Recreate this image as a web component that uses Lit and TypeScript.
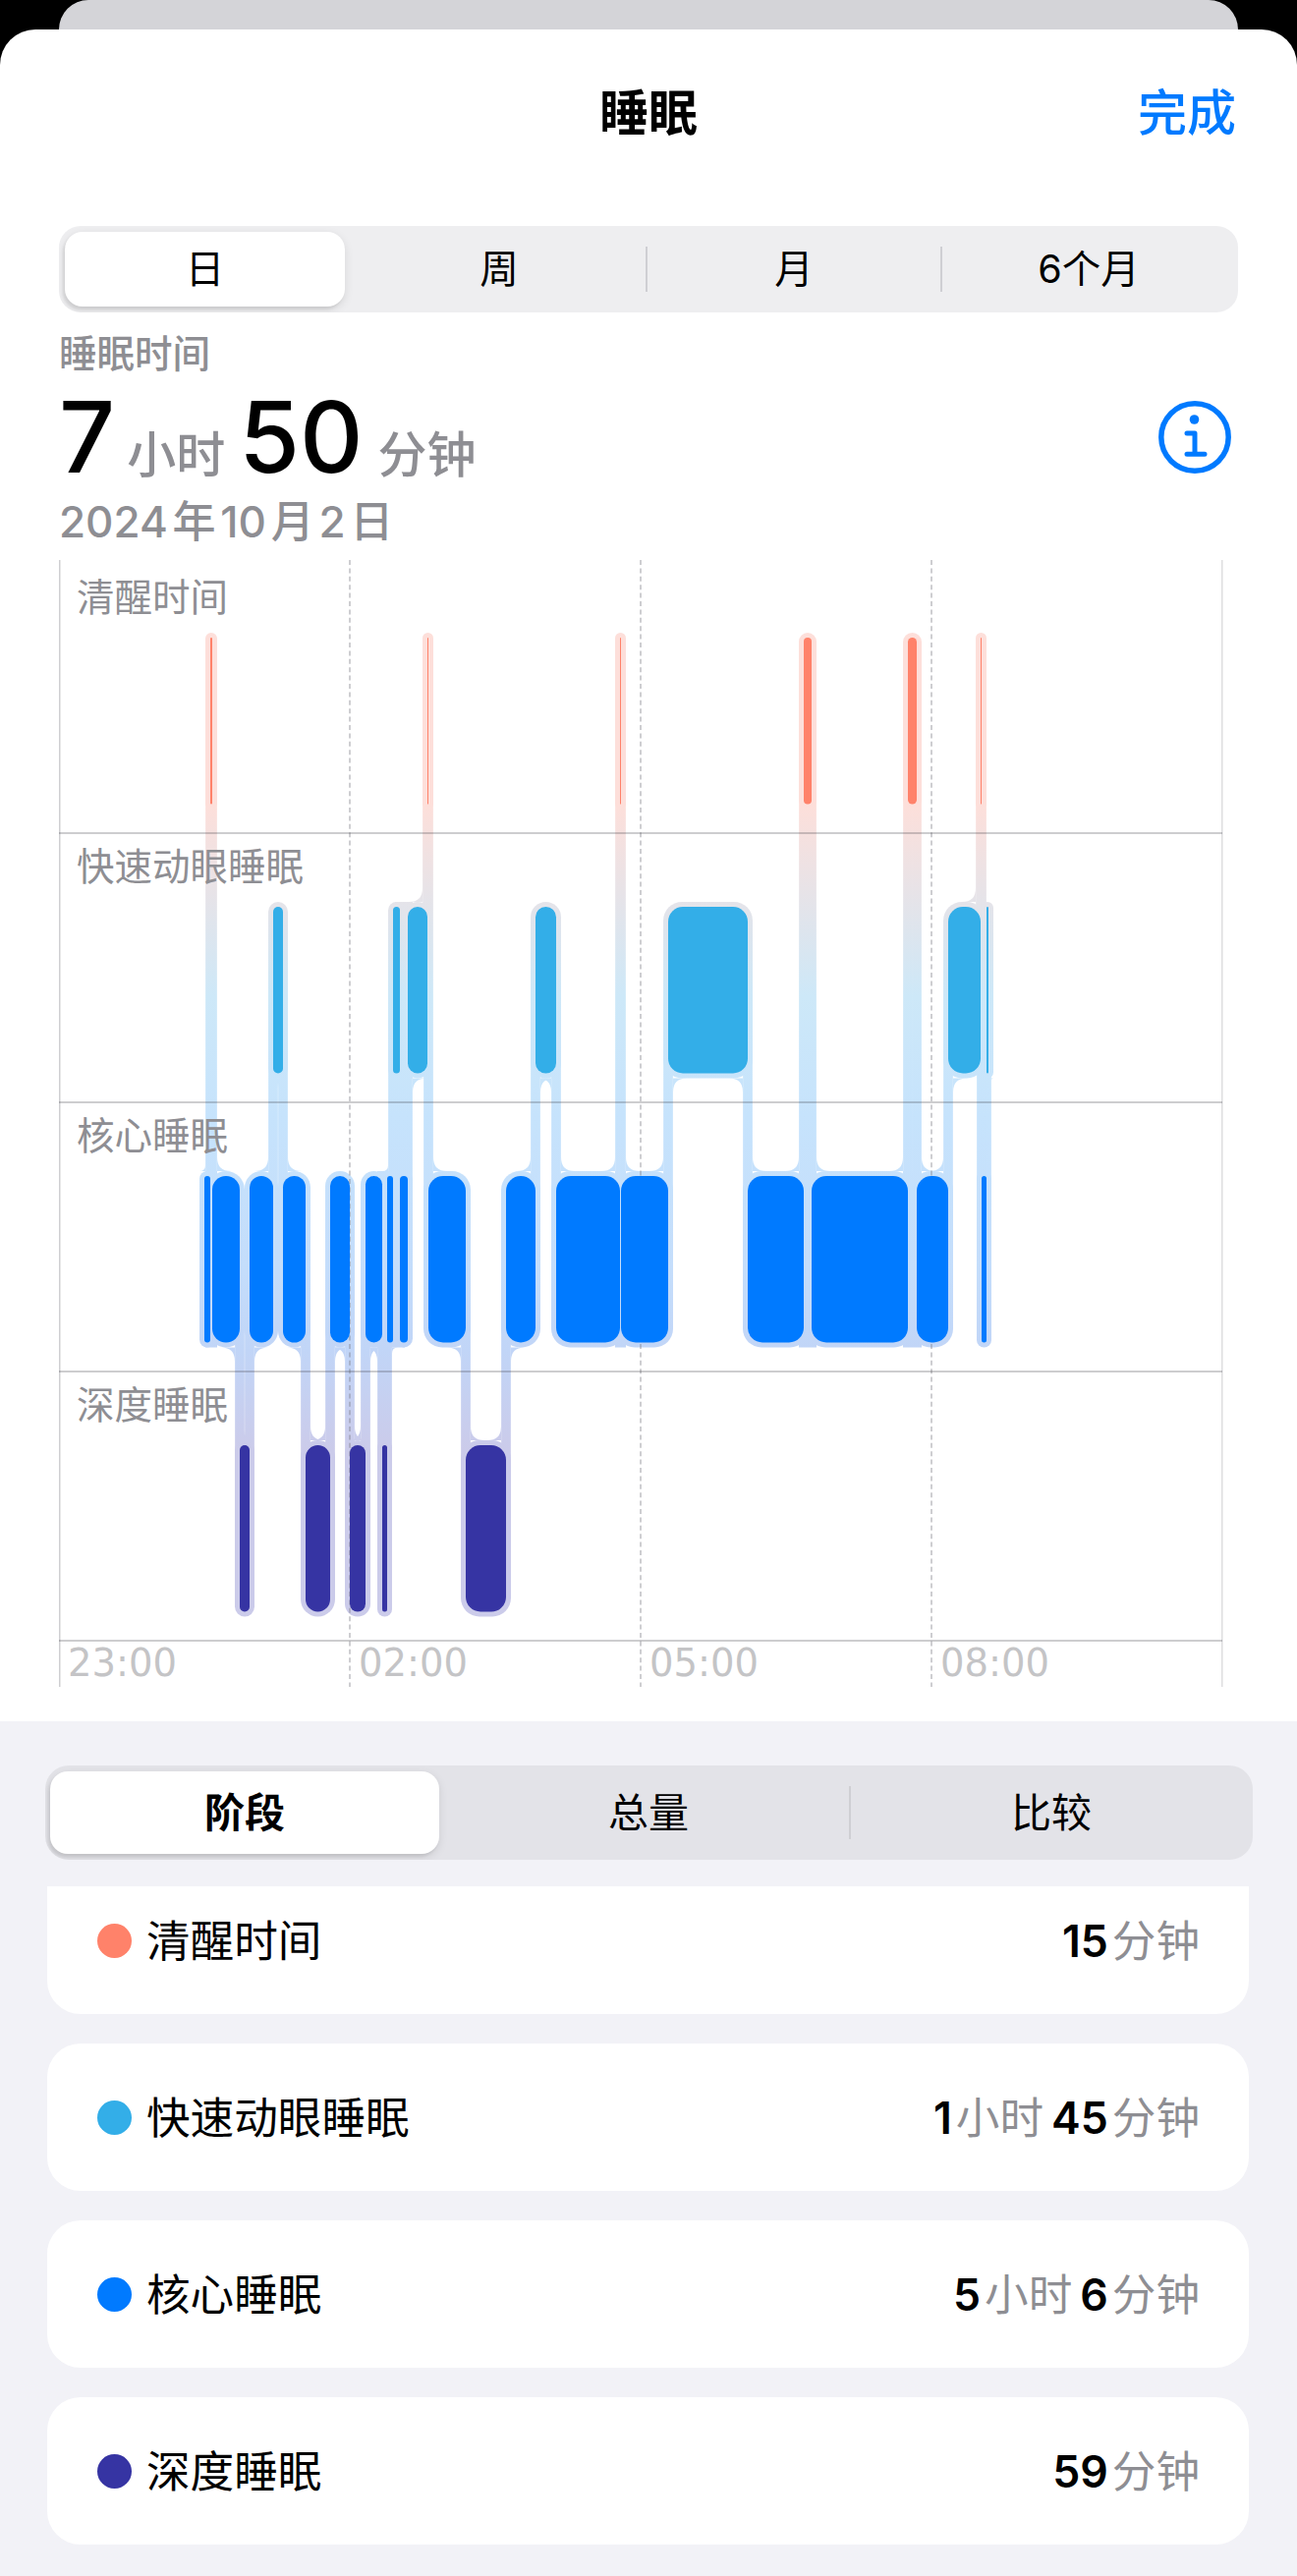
import { LitElement, html, css, svg } from "lit";
import { customElement } from "lit/decorators.js";

// stage: 0 awake, 1 rem, 2 core, 3 deep
const SEGMENTS: [number, number, number][] = [
  [2, 208, 214], [0, 214, 216], [2, 216, 244], [3, 244, 254], [2, 254, 278],
  [1, 278, 288], [2, 288, 311], [3, 311, 336], [2, 336, 356], [3, 356, 372],
  [2, 372, 389], [3, 389, 394], [2, 394, 400], [1, 400, 407], [2, 407, 415],
  [1, 415, 435], [0, 435, 436], [2, 436, 474], [3, 474, 515], [2, 515, 545],
  [1, 545, 566], [2, 566, 631], [0, 631, 632], [2, 632, 680], [1, 680, 761],
  [2, 761, 818], [0, 818, 826], [2, 826, 924], [0, 924, 933], [2, 933, 965],
  [1, 965, 998], [0, 998, 999], [2, 999, 1004], [1, 1004, 1006],
];
const STAGE_TOP = [649, 923, 1197, 1471];
const BAR_H = 169.5;
const PAD = 5;
const COLORS = ["#ff826a", "#33aee8", "#007aff", "#3634a3"];
const GRID_H = [848, 1122, 1396, 1670];
const GRID_DASH = [356, 652, 948];

const LEGEND = [
  { name: "清醒时间", color: COLORS[0], value: [["15", "分钟"]] },
  { name: "快速动眼睡眠", color: COLORS[1], value: [["1", "小时"], ["45", "分钟"]] },
  { name: "核心睡眠", color: COLORS[2], value: [["5", "小时"], ["6", "分钟"]] },
  { name: "深度睡眠", color: COLORS[3], value: [["59", "分钟"]] },
];

function fillet(x: number, y: number, side: number, dir: number, r: number) {
  return svg`<path d="M${x} ${y}L${x} ${y + dir * r}Q${x} ${y} ${x + side * r} ${y}Z" />`;
}

function halos() {
  const out: unknown[] = [];
  SEGMENTS.forEach(([stage, a, b], i) => {
    const rx = Math.min((b - a + 2 * PAD) / 2, 19);
    out.push(svg`<rect x=${a - PAD} y=${STAGE_TOP[stage] - PAD} width=${b - a + 2 * PAD} height=${BAR_H + 2 * PAD} rx=${rx} />`);

    // same stage again right after a short visit elsewhere: the halo stays flat
    const after = SEGMENTS[i + 2];
    if (after && after[0] === stage && after[1] - b < 10) {
      out.push(svg`<rect x=${b - PAD} y=${STAGE_TOP[stage] - PAD} width=${after[1] - b + 2 * PAD} height=${BAR_H + 2 * PAD} />`);
    }

    // connector to the next stage, with its two inner fillets
    const next = SEGMENTS[i + 1];
    if (!next) return;
    const [nextStage, , nextEnd] = next;
    const down = nextStage > stage;
    const upper = down ? stage : nextStage;
    const lower = down ? nextStage : stage;
    const y0 = STAGE_TOP[upper] + BAR_H / 2;
    const y1 = STAGE_TOP[lower] + BAR_H / 2;
    out.push(svg`<rect x=${b - 4.85} y=${y0} width="9.7" height=${y1 - y0} />`);

    const yUpper = STAGE_TOP[upper] + BAR_H + PAD;
    const yLower = STAGE_TOP[lower] - PAD;
    const rPrev = Math.min(14, b - a);
    const rNext = Math.min(14, nextEnd - b);
    if (down) {
      out.push(fillet(b - PAD, yUpper, -1, 1, rPrev));
      out.push(fillet(b + PAD, yLower, 1, -1, rNext));
    } else {
      out.push(fillet(b + PAD, yUpper, 1, 1, rNext));
      out.push(fillet(b - PAD, yLower, -1, -1, rPrev));
    }
  });
  return out;
}

@customElement("app-root")
export class AppRoot extends LitElement {
  static styles = css`
    :host {
      display: block;
      width: 1320px;
      height: 2622px;
      overflow: hidden;
      background: #000;
      font-family: Inter, "Noto Sans CJK SC", sans-serif;
      color: #000;
    }
    .peek {
      height: 30px;
      margin: 0 60px;
      background: #d4d4d8;
      border-radius: 30px 30px 0 0;
    }
    .sheet {
      height: 1722px;
      box-sizing: border-box;
      padding: 55px 60px 0;
      background: #fff;
      border-radius: 36px 36px 0 0;
    }
    .nav {
      display: grid;
      grid-template-columns: 1fr auto 1fr;
      align-items: center;
      height: 60px;
      margin-bottom: 85px;
      font-size: 50px;
      line-height: 60px;
    }
    .nav b {
      font-weight: 600;
    }
    .nav a {
      justify-self: end;
      margin-right: 2px;
      color: #007aff;
      font-weight: 500;
    }
    .seg {
      display: grid;
      box-sizing: border-box;
      align-items: center;
      overflow: hidden;
      text-align: center;
      white-space: nowrap;
    }
    .seg > div {
      position: relative;
    }
    .seg .on {
      background: #fff;
      border-radius: 18px;
      box-shadow: 0 3px 10px rgba(0, 0, 0, 0.1), -2px 3px 3px rgba(0, 0, 0, 0.08);
    }
    .seg .sep::before {
      content: "";
      position: absolute;
      left: -1px;
      top: 50%;
      width: 2px;
      background: #cfcfd3;
    }
    .seg-time {
      grid-template-columns: 292px repeat(3, 300px);
      height: 88px;
      padding: 6px 2px 6px 6px;
      background: #eeeef0;
      border-radius: 22px;
      font-size: 39.5px;
    }
    .seg-time > div {
      line-height: 76px;
    }
    .seg-time .on {
      width: 285px;
    }
    .seg-time .sep::before {
      height: 46px;
      margin-top: -23px;
    }
    .seg-stage {
      grid-template-columns: 404px 410px 410px;
      height: 96px;
      margin: 45px 45px 27px 46px;
      padding-left: 5px;
      background: #e3e3e8;
      border-radius: 24px;
      font-size: 41px;
    }
    .seg-stage > div {
      line-height: 84px;
    }
    .seg-stage .on {
      width: 396px;
      font-weight: 600;
    }
    .seg-stage .sep::before {
      height: 54px;
      margin-top: -27px;
    }
    .caption {
      margin-top: 20px;
      font-size: 38.5px;
      font-weight: 500;
      line-height: 44px;
      color: #8e8e93;
    }
    .total {
      display: flex;
      align-items: center;
      justify-content: space-between;
      height: 110px;
      margin-top: 8px;
      padding-right: 7px;
    }
    .total span {
      font-size: 100px;
      font-weight: 500;
      line-height: 110px;
    }
    .total i {
      margin: 0 14px 0 12px;
      font-style: normal;
      font-size: 50px;
      font-weight: 500;
      color: #8e8e93;
    }
    .total i:last-of-type {
      margin-left: 15px;
    }
    .total svg {
      display: block;
      width: 74px;
      height: 74px;
    }
    .date {
      margin-top: 6px;
      font-size: 44px;
      font-weight: 500;
      line-height: 50px;
      word-spacing: -7px;
      color: #8e8e93;
    }
    .chart {
      position: relative;
      width: 1190px;
      height: 1147px;
      margin-top: 14px;
    }
    .chart svg {
      position: absolute;
      inset: 0;
      width: 1190px;
      height: 1147px;
    }
    .rows {
      position: relative;
      display: grid;
      grid-template-rows: 278px 274px 274px 274px;
      padding-left: 18px;
      font-size: 38.5px;
      line-height: 44px;
      color: #8e8e93;
    }
    .rows div {
      padding-top: 12px;
    }
    .rows div:first-child {
      padding-top: 16px;
    }
    .axis {
      position: relative;
      display: grid;
      grid-template-columns: repeat(4, 296px);
      font-family: "DejaVu Sans", sans-serif;
      font-size: 38.5px;
      line-height: 46px;
      color: #c4c4c6;
    }
    .axis div {
      padding-left: 9px;
    }
    .cards {
      display: flex;
      flex-direction: column;
      gap: 30px;
      margin: 0 49px 0 48px;
    }
    .card {
      display: flex;
      align-items: center;
      justify-content: space-between;
      height: 150px;
      box-sizing: border-box;
      padding: 0 50px 0 51px;
      background: #fff;
      border-radius: 34px;
      font-size: 44.6px;
      line-height: 56px;
    }
    .card:first-child {
      height: 130px;
      padding-bottom: 20px;
      border-radius: 0 0 34px 34px;
    }
    .name {
      display: flex;
      align-items: center;
      gap: 15px;
    }
    .label,
    .amount {
      padding-top: 2px;
    }
    .dot {
      width: 35px;
      height: 35px;
      border-radius: 50%;
    }
    .amount b {
      font-weight: 600;
    }
    .amount span {
      margin: 0 8px 0 4px;
      color: #8e8e93;
    }
    .amount span:last-child {
      margin-right: 0;
    }
    .rest {
      height: 870px;
      overflow: hidden;
      background: #f2f2f7;
      padding-top: 0.02px;
    }
  `;

  chart() {
    return svg`
      <svg viewBox="60 570 1190 1147">
        <defs>
          <linearGradient id="halo" gradientUnits="userSpaceOnUse" x1="0" y1="644" x2="0" y2="1645">
            <stop offset="0.175" stop-color="#fddfda" />
            <stop offset="0.37" stop-color="#cde8f8" />
            <stop offset="0.49" stop-color="#c6e3fc" />
            <stop offset="0.65" stop-color="#c4ddfb" />
            <stop offset="0.73" stop-color="#c1d5f7" />
            <stop offset="0.83" stop-color="#cbcbea" />
          </linearGradient>
        </defs>
        <g fill="url(#halo)">${halos()}</g>
        <rect x="60" y="570" width="1.5" height="1147" fill="#cfcfd2" />
        <rect x="1243" y="570" width="1.5" height="1147" fill="#dedee0" />
        ${GRID_DASH.map(
          (x) => svg`<line x1=${x} x2=${x} y1="570" y2="1717" stroke="rgba(120,120,128,0.36)" stroke-width="2" stroke-dasharray="5 3.4" />`
        )}
        ${GRID_H.map(
          (y) => svg`<rect x="60" y=${y - 0.75} width="1184" height="1.5" fill="rgba(60,60,67,0.34)" />`
        )}
        ${SEGMENTS.map(
          ([stage, a, b]) => svg`<rect x=${a} y=${STAGE_TOP[stage]} width=${b - a} height=${BAR_H} rx=${Math.min((b - a) / 2, 15)} fill=${COLORS[stage]} />`
        )}
      </svg>
    `;
  }

  render() {
    return html`
      <div class="peek"></div>
      <div class="sheet">
        <div class="nav"><span></span><b>睡眠</b><a>完成</a></div>
        <div class="seg seg-time">
          <div class="on">日</div>
          <div>周</div>
          <div class="sep">月</div>
          <div class="sep">6个月</div>
        </div>
        <div class="caption">睡眠时间</div>
        <div class="total">
          <div><span>7</span><i>小时</i><span>50</span><i>分钟</i></div>
          <svg viewBox="0 0 74 74" fill="none">
            <circle cx="37" cy="37" r="34.2" stroke="#007aff" stroke-width="5.5" />
            <circle cx="36.5" cy="19" r="4.8" fill="#007aff" />
            <path d="M29 33h8v21.3M29 54.3h18" stroke="#007aff" stroke-width="5" stroke-linecap="round" stroke-linejoin="round" />
          </svg>
        </div>
        <div class="date">2024 年 10 月 2 日</div>
        <div class="chart">
          ${this.chart()}
          <div class="rows">
            <div>清醒时间</div>
            <div>快速动眼睡眠</div>
            <div>核心睡眠</div>
            <div>深度睡眠</div>
          </div>
          <div class="axis">
            <div>23:00</div>
            <div>02:00</div>
            <div>05:00</div>
            <div>08:00</div>
          </div>
        </div>
      </div>
      <div class="rest">
        <div class="seg seg-stage">
          <div class="on">阶段</div>
          <div>总量</div>
          <div class="sep">比较</div>
        </div>
        <div class="cards">
          ${LEGEND.map(
            (row) => html`
              <div class="card">
                <div class="name">
                  <div class="dot" style="background:${row.color}"></div>
                  <div class="label">${row.name}</div>
                </div>
                <div class="amount">
                  ${row.value.map(([n, unit]) => html`<b>${n}</b><span>${unit}</span>`)}
                </div>
              </div>
            `
          )}
        </div>
      </div>
    `;
  }
}
